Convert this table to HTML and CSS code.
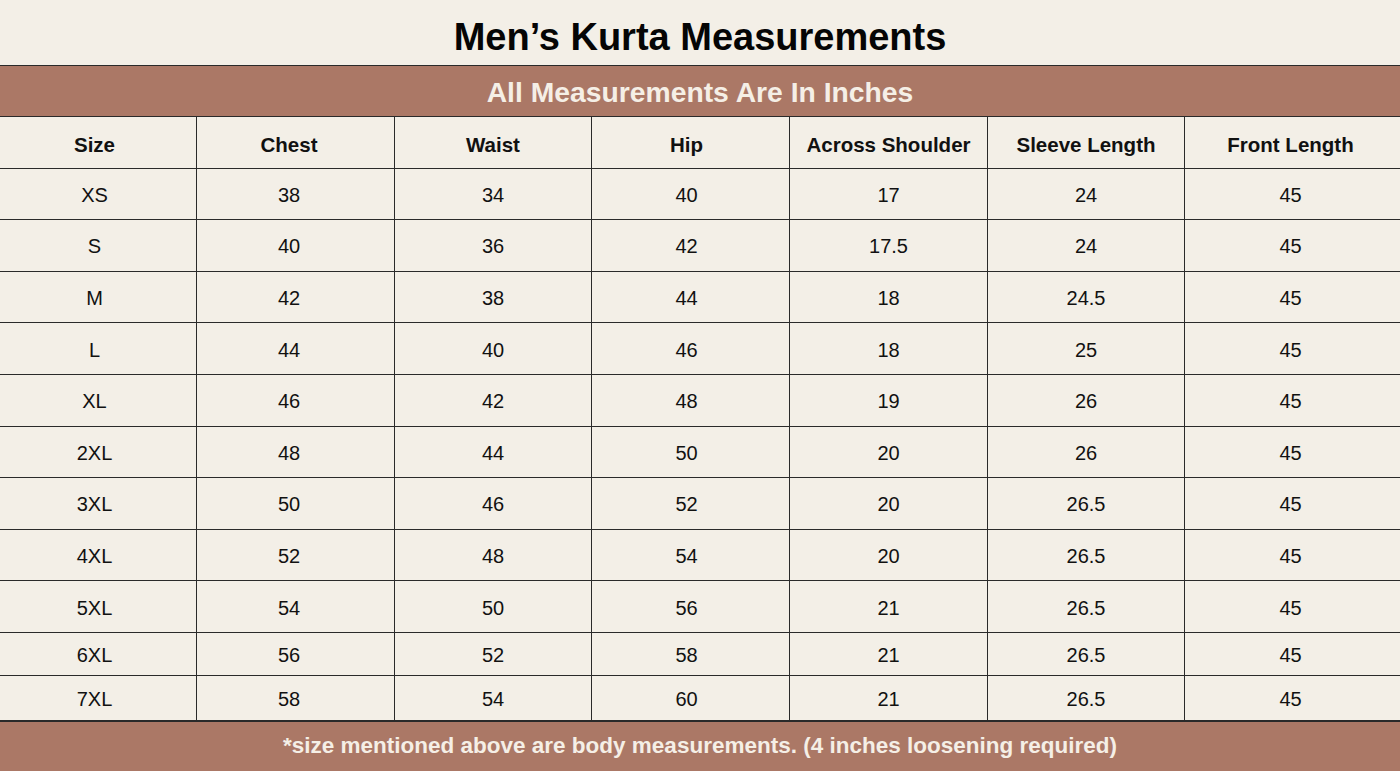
FILE: index.html
```html
<!DOCTYPE html>
<html lang="en">
<head>
<meta charset="utf-8">
<title>Men’s Kurta Measurements</title>
<link rel="stylesheet" href="styles.css">
</head>
<body>
<div class="chart">
  <h1 class="title">Men’s Kurta Measurements</h1>
  <div class="band">All Measurements Are In Inches</div>
  <div class="table">
    <div class="row head"><div>Size</div><div>Chest</div><div>Waist</div><div>Hip</div><div>Across Shoulder</div><div>Sleeve Length</div><div>Front Length</div></div>
    <div class="row"><div>XS</div><div>38</div><div>34</div><div>40</div><div>17</div><div>24</div><div>45</div></div>
    <div class="row"><div>S</div><div>40</div><div>36</div><div>42</div><div>17.5</div><div>24</div><div>45</div></div>
    <div class="row"><div>M</div><div>42</div><div>38</div><div>44</div><div>18</div><div>24.5</div><div>45</div></div>
    <div class="row"><div>L</div><div>44</div><div>40</div><div>46</div><div>18</div><div>25</div><div>45</div></div>
    <div class="row"><div>XL</div><div>46</div><div>42</div><div>48</div><div>19</div><div>26</div><div>45</div></div>
    <div class="row"><div>2XL</div><div>48</div><div>44</div><div>50</div><div>20</div><div>26</div><div>45</div></div>
    <div class="row"><div>3XL</div><div>50</div><div>46</div><div>52</div><div>20</div><div>26.5</div><div>45</div></div>
    <div class="row"><div>4XL</div><div>52</div><div>48</div><div>54</div><div>20</div><div>26.5</div><div>45</div></div>
    <div class="row"><div>5XL</div><div>54</div><div>50</div><div>56</div><div>21</div><div>26.5</div><div>45</div></div>
    <div class="row short"><div>6XL</div><div>56</div><div>52</div><div>58</div><div>21</div><div>26.5</div><div>45</div></div>
    <div class="row last"><div>7XL</div><div>58</div><div>54</div><div>60</div><div>21</div><div>26.5</div><div>45</div></div>
  </div>
  <div class="footer">*size mentioned above are body measurements. (4 inches loosening required)</div>
</div>
</body>
</html>
```

FILE: styles.css
```css
* { box-sizing: border-box; }
html, body { margin: 0; padding: 0; }
body {
  background: #f3efe7;
  font-family: "Liberation Sans", Arial, sans-serif;
  color: #111;
  width: 1400px;
  height: 771px;
  overflow: hidden;
}
.chart { display: flex; flex-direction: column; height: 771px; }
.title {
  margin: 0;
  height: 66px;
  flex: none;
  display: flex;
  align-items: center;
  justify-content: center;
  font-size: 38px;
  font-weight: 700;
  color: #050505;
  border-bottom: 1.5px solid #2a2a2a;
  padding-top: 9px;
}
.band {
  height: 51px;
  flex: none;
  background: #ab7866;
  color: #f5efe6;
  display: flex;
  align-items: center;
  justify-content: center;
  font-size: 28.3px;
  font-weight: 700;
  border-bottom: 1.5px solid #2a2a2a;
  padding-top: 3px;
}
.table { flex: none; }
.row {
  display: grid;
  grid-template-columns: 197px 198px 197px 198px 198px 197px 1fr;
  height: 51.6px;
  border-bottom: 1.5px solid #2a2a2a;
}
.row > div {
  display: flex;
  align-items: center;
  justify-content: center;
  font-size: 20px;
  border-right: 1.5px solid #2a2a2a;
  padding-top: 3px;
}
.row > div:nth-child(1) { padding-right: 7px; }
.row > div:nth-child(2) { padding-right: 13px; }
.row > div:nth-child(4) { padding-right: 8px; }
.row > div:nth-child(7) { padding-right: 4px; }
.row > div:last-child { border-right: none; }
.row.head > div { font-weight: 700; font-size: 20.5px; padding-top: 6px; }
.row.short { height: 43px; }
.row.last { height: 46px; border-bottom: 2px solid #2a2a2a; }
.footer {
  flex: 1;
  background: #ab7866;
  color: #f5efe6;
  display: flex;
  align-items: center;
  justify-content: center;
  font-size: 22.5px;
  font-weight: 700;
  padding-top: 0;
}
```
